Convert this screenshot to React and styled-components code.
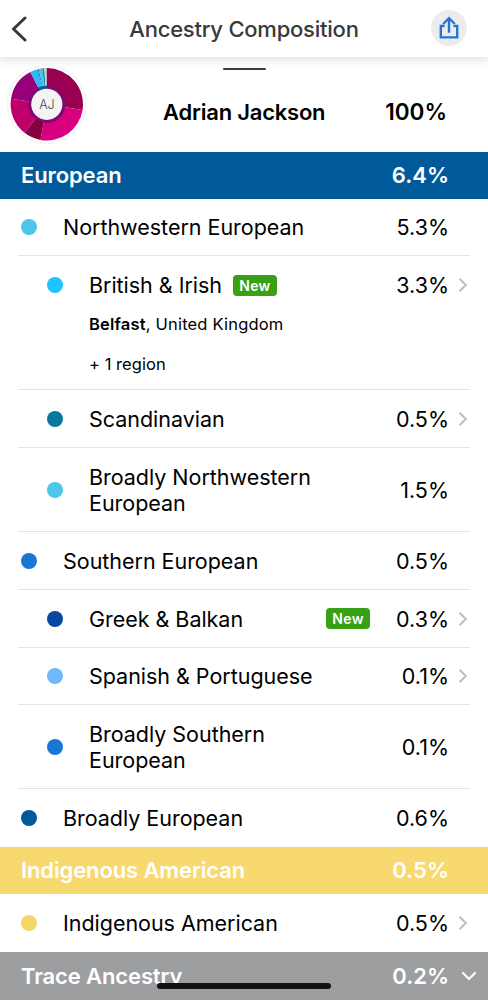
import React from 'react'
import styled, { createGlobalStyle } from 'styled-components';

const GlobalStyle = createGlobalStyle`
  * {
    box-sizing: border-box;
  }

  body {
    margin: 0;
    background: #fff;
    color: #000;
    font-family: Inter, "Liberation Sans", sans-serif;
    -webkit-font-smoothing: antialiased;
  }
`

const Screen = styled.div`
  position: relative;
  width: 488px;
  height: 1000px;
  overflow: hidden;
  background: #fff;
`

const Header = styled.header`
  position: relative;
  display: grid;
  grid-template-columns: 58px 1fr 58px;
  align-items: center;
  height: 57px;
  background: #fff;
  box-shadow: 0 2px 9px rgba(0, 0, 0, 0.15);
`

const BackButton = styled.button`
  display: flex;
  padding: 0 0 0 10px;
  border: 0;
  background: none;
`

const Title = styled.h1`
  margin: 0;
  padding-top: 1px;
  color: #39393b;
  font-size: 22px;
  font-weight: 500;
  letter-spacing: -0.23px;
  text-align: center;
`

const ShareButton = styled.button`
  display: flex;
  align-items: center;
  justify-content: center;
  width: 36px;
  height: 36px;
  margin: 0 0 1px 1px;
  padding: 0 1px 1px 0;
  border: 0;
  border-radius: 50%;
  background: #ececee;
`

const Profile = styled.section`
  position: relative;
  display: flex;
  height: 95px;
  padding-left: 6px;
`

const Handle = styled.div`
  position: absolute;
  top: 11px;
  left: 223px;
  width: 43px;
  height: 2px;
  border-radius: 2px;
  background: #3c3c3e;
`

const ProfileName = styled.div`
  flex: 1;
  padding: 41px 0 0 75px;
  font-size: 22px;
  font-weight: 600;
  line-height: 28px;
  letter-spacing: -0.22px;
`

const ProfileTotal = styled.div`
  padding: 41px 41px 0 0;
  font-size: 22.5px;
  font-weight: 600;
  line-height: 28px;
`

const GroupBar = styled.div`
  display: flex;
  align-items: center;
  height: ${props => props.$height || 47}px;
  padding: 0 9px 1px 21px;
  background: ${props => props.$color};
  color: #fff;
  font-size: 22px;
  font-weight: 600;
`

const GroupName = styled.div`
  flex: 1;
  letter-spacing: -0.12px;
`

const Row = styled.div`
  display: grid;
  grid-template-columns: 16px 1fr auto 21px;
  align-items: center;
  height: ${props => props.$height}px;
  margin: 0 18px;
  padding: 0 0 0 ${props => (props.$nested ? 29 : 3)}px;
  border-bottom: ${props => (props.$last ? '0' : '1px solid #e4e4e6')};
`

const Dot = styled.span`
  width: 16px;
  height: 16px;
  border-radius: 50%;
  background: ${props => props.$color};
`

const Label = styled.div`
  display: flex;
  align-items: center;
  gap: 11px;
  padding-left: 26px;
  font-size: 21.5px;
  line-height: 26px;
  letter-spacing: -0.03px;
`

const Name = styled.span`
  flex: ${props => (props.$grow ? 1 : 'none')};
  white-space: pre-line;
`

const Badge = styled.span`
  width: 44px;
  height: 21px;
  margin-right: 26px;
  border-radius: 4px;
  background: #38a015;
  color: #fff;
  font-size: 14px;
  font-weight: 600;
  line-height: 21px;
  letter-spacing: 0.3px;
  text-align: center;
`

const Percent = styled.div`
  font-size: ${props => (props.$bold ? 22 : 21.5)}px;
  line-height: 26px;
  letter-spacing: ${props => (props.$bold ? 0 : -0.02)}px;
`

const IconSlot = styled.div`
  display: flex;
  justify-content: flex-end;
  width: ${props => props.$width || 21}px;
  padding: 0 2px 0 0;
`

const RegionBlock = styled.div`
  height: 134px;
  margin: 0 18px;
  border-bottom: 1px solid #e4e4e6;

  ${Row} {
    margin: 0;
  }
`

const Region = styled.div`
  position: relative;
  height: 40px;
  padding: 0 0 0 71px;
  font-size: 16.5px;
  line-height: 20px;
  letter-spacing: ${props => props.$spacing || 0}px;
  white-space: nowrap;

  b {
    font-weight: 600;
  }
`

const HomeIndicator = styled.div`
  position: absolute;
  left: 157px;
  bottom: 11px;
  width: 174px;
  height: 6px;
  border-radius: 3px;
  background: #111213;
`

const slices = [
  { from: 0, to: 99, color: '#99004f' },
  { from: 99, to: 190, color: '#d8007f' },
  { from: 190, to: 218, color: '#860040' },
  { from: 218, to: 279, color: '#bf0069' },
  { from: 279, to: 333, color: '#970078' },
  { from: 333, to: 345, color: '#2bbcf5' },
  { from: 345, to: 347, color: '#087a9e' },
  { from: 347, to: 353, color: '#4fc3e8' },
  { from: 353, to: 356, color: '#1b75c9' },
  { from: 356, to: 358, color: '#f3d374' },
  { from: 358, to: 360, color: '#a5a7ab' },
]

const point = (deg, r) => {
  const a = (deg - 90) * Math.PI / 180
  return `${41 + r * Math.cos(a)} ${41 + r * Math.sin(a)}`
}

const slicePath = (from, to, r) =>
  `M41 41 L${point(from, r)} A${r} ${r} 0 0 1 ${point(to, r)} Z`

const Donut = () => (
  <svg width="82" height="94" viewBox="0 0 82 94">
    <g transform="translate(-0.2 6.3)">
      <circle cx="41" cy="41" r="40" fill="#f3f3f4" />
      <circle cx="41" cy="41" r="38.6" fill="#fff" />
      {slices.map(s => (
        <path key={s.from} d={slicePath(s.from, s.to, 36.2)} fill={s.color} />
      ))}
      <circle cx="41" cy="41" r="18.5" fill="#7c0872" />
      <path d={slicePath(333, 360, 18.5)} fill="#075f93" />
      <circle cx="41" cy="41" r="15.6" fill="#f4f4f5" />
      <text x="41" y="45.5" textAnchor="middle" fontSize="12.5" fontWeight="300" letterSpacing="-0.3" fill="#4a4a4c">AJ</text>
    </g>
  </svg>
)

const Chevron = () => (
  <svg width="10" height="16" viewBox="0 0 10 16" fill="none" stroke="#bfbfc1" strokeWidth="2.1">
    <path d="M1.5 1.7 L7.8 8 L1.5 14.3" />
  </svg>
)

const ChevronDown = () => (
  <svg width="16" height="10" viewBox="0 0 16 10" fill="none" stroke="#fff" strokeWidth="2.2" strokeLinecap="round">
    <path d="M2 2 L8 8 L14 2" />
  </svg>
)

const Population = ({ name, percent, color, height, nested, last, link, badge }) => (
  <Row $height={height} $nested={nested} $last={last}>
    <Dot $color={color} />
    <Label>
      <Name $grow={badge === 'end'}>{name}</Name>
      {badge && <Badge>New</Badge>}
    </Label>
    <Percent>{percent}</Percent>
    <IconSlot>{link && <Chevron />}</IconSlot>
  </Row>
)

const Group = ({ name, percent, color, height, open }) => (
  <GroupBar $color={color} $height={height}>
    <GroupName>{name}</GroupName>
    <Percent $bold>{percent}</Percent>
    <IconSlot $width={30}>{open && <ChevronDown />}</IconSlot>
  </GroupBar>
)

const App = () => {
  return (
    <Screen>
      <GlobalStyle />
      <Header>
        <BackButton aria-label="Back">
          <svg width="18" height="26" viewBox="0 0 18 26" fill="none" stroke="#39393b" strokeWidth="3" strokeLinecap="round" strokeLinejoin="round">
            <path d="M15 2 L3.5 13 L15 24" />
          </svg>
        </BackButton>
        <Title>Ancestry Composition</Title>
        <ShareButton aria-label="Share">
          <svg width="20" height="24" viewBox="0 0 20 24" fill="none" stroke="#2376d2" strokeWidth="2.4">
            <path d="M5.6 10 H1.8 V21.4 H18.2 V10 H14.4" />
            <path d="M10 16.8 V2.2" />
            <path d="M4.2 8 L10 2.2 L15.8 8" />
          </svg>
        </ShareButton>
      </Header>

      <Profile>
        <Donut />
        <Handle />
        <ProfileName>Adrian Jackson</ProfileName>
        <ProfileTotal>100%</ProfileTotal>
      </Profile>

      <Group name="European" percent="6.4%" color="#005a9a" />
      <Population name="Northwestern European" percent="5.3%" color="#4ec6e8" height={57} />
      <RegionBlock>
        <Population name="British & Irish" percent="3.3%" color="#20c3ff" height={58} nested last link badge="inline" />
        <Region $spacing={0.19}><b>Belfast</b>, United Kingdom</Region>
        <Region $spacing={0.05}>+ 1 region</Region>
      </RegionBlock>
      <Population name="Scandinavian" percent="0.5%" color="#0978a0" height={58} nested link />
      <Population name={'Broadly Northwestern\nEuropean'} percent="1.5%" color="#4ec6e8" height={84} nested />
      <Population name="Southern European" percent="0.5%" color="#1976d2" height={58} />
      <Population name="Greek & Balkan" percent="0.3%" color="#0747a1" height={58} nested link badge="end" />
      <Population name="Spanish & Portuguese" percent="0.1%" color="#6fb9fa" height={57} nested link />
      <Population name={'Broadly Southern\nEuropean'} percent="0.1%" color="#1976d2" height={84} nested />
      <Population name="Broadly European" percent="0.6%" color="#005a9a" height={58} last />
      <Group name="Indigenous American" percent="0.5%" color="#f8d970" />
      <Population name="Indigenous American" percent="0.5%" color="#f5d769" height={58} last link />
      <Group name="Trace Ancestry" percent="0.2%" color="#9d9ea0" height={48} open />
      <HomeIndicator />
    </Screen>
  )
}

export default App;
